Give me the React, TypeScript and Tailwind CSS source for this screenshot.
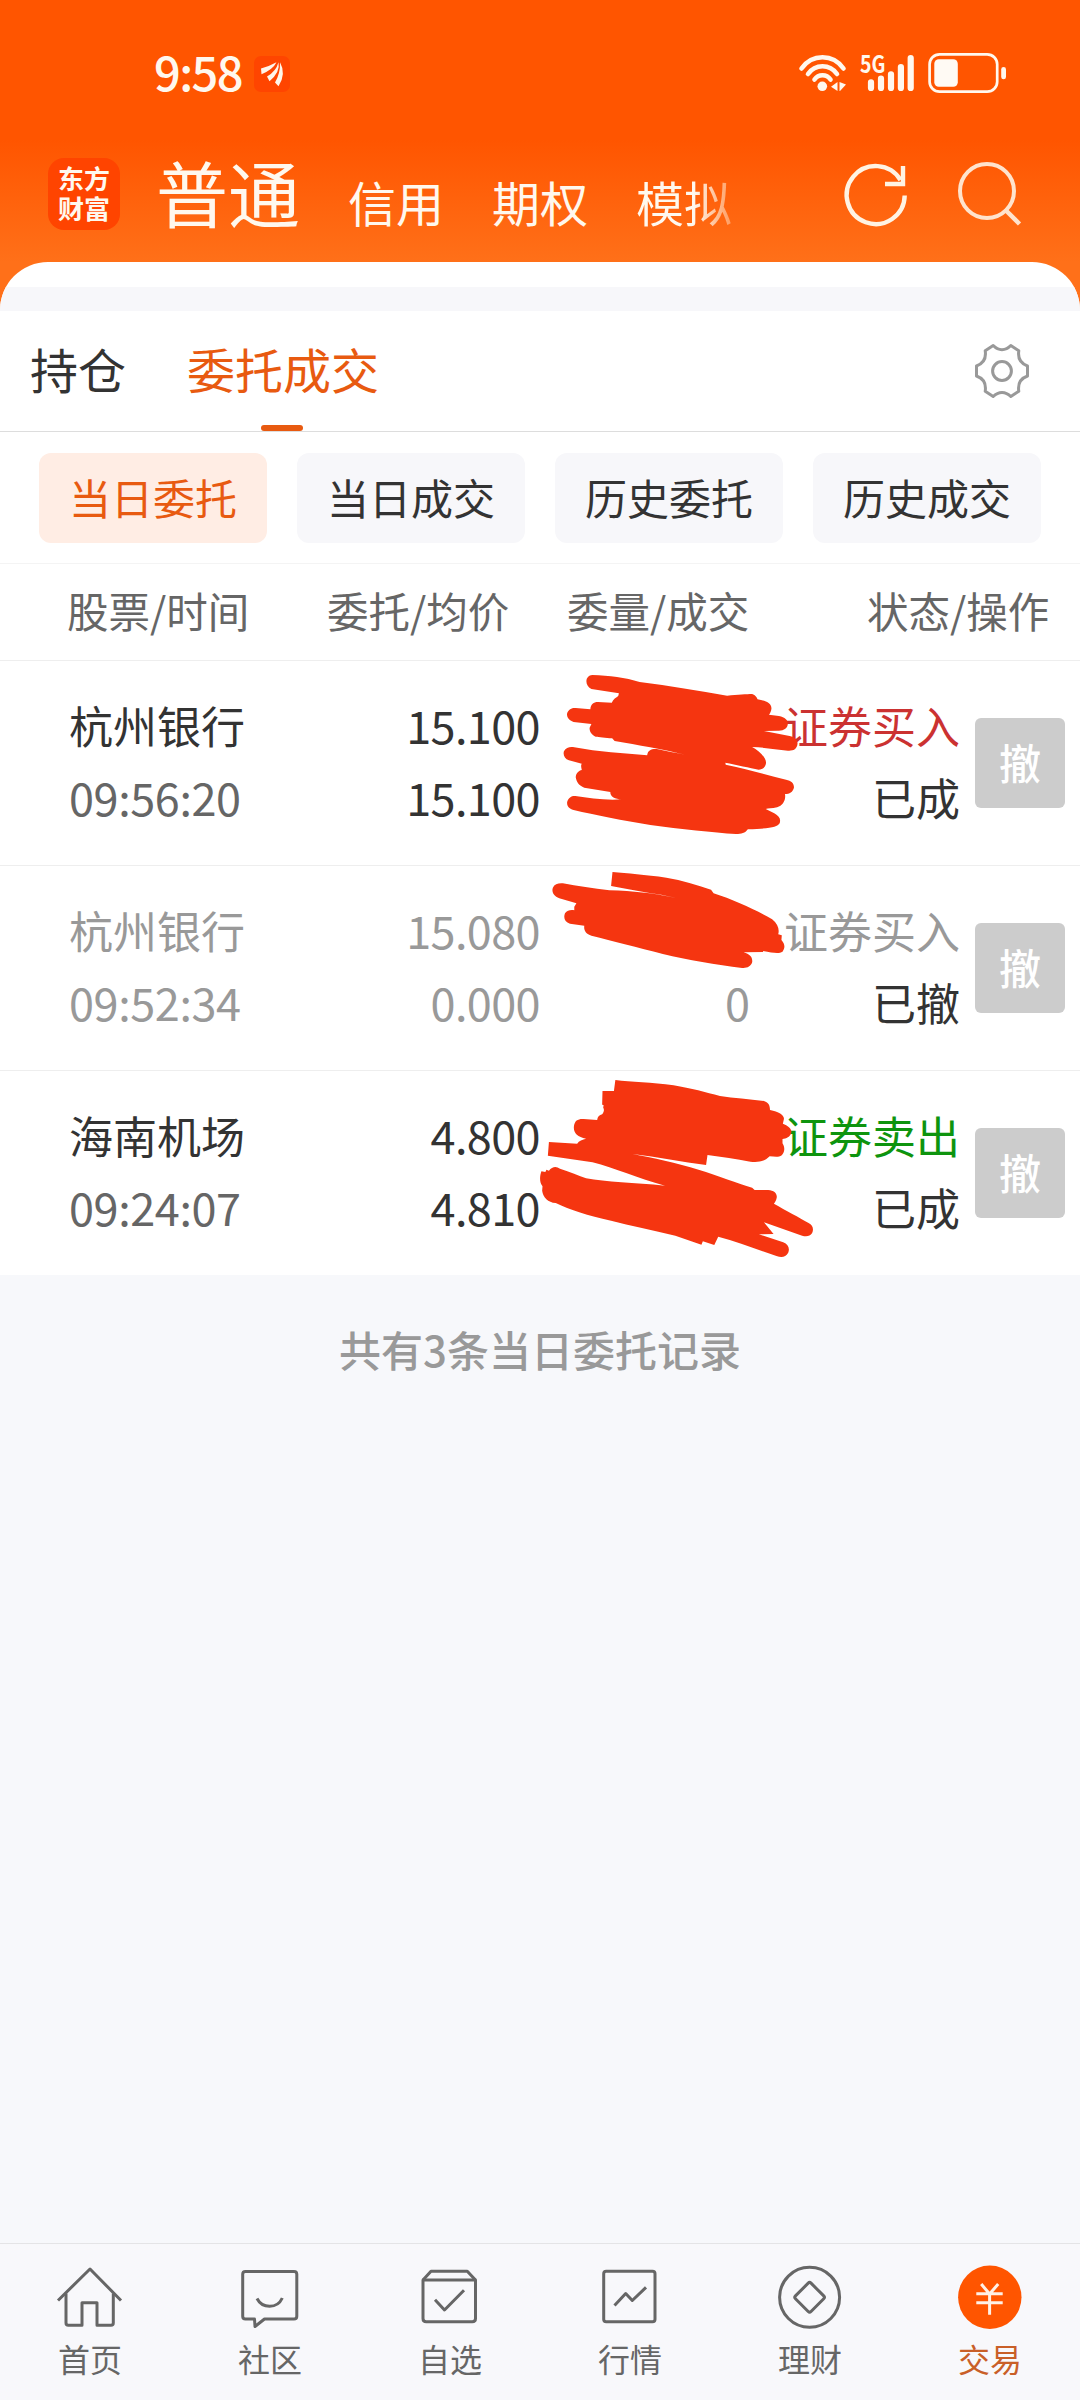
import type { ReactNode } from "react";

const chips = ["当日委托", "当日成交", "历史委托", "历史成交"];

type Order = {
  name: string;
  time: string;
  price: string;
  avg: string;
  filled?: string;
  side: string;
  sideClass: string;
  state: string;
  mutedClass: string;
  timeClass: string;
  viewBox: string;
  svgClass: string;
  strokes: string[];
};

const orders: Order[] = [
  {
    name: "杭州银行",
    time: "09:56:20",
    price: "15.100",
    avg: "15.100",
    side: "证券买入",
    sideClass: "text-[#cb3231]",
    state: "已成",
    mutedClass: "text-[#333333]",
    timeClass: "text-[#666666]",
    viewBox: "0 0 1568 615",
    svgClass: "h-[205px]",
    strokes: [
      "M203 45 C250 47 295 52 335 66 C420 78 500 92 580 107 C610 103 635 103 650 102 C660 106 663 112 665 118 C690 122 705 130 704 146 C703 154 700 160 697 164 L725 168 C742 172 750 180 750 190 C750 206 738 213 722 212 L683 213 L755 228 C770 231 778 240 777 252 C775 268 765 273 750 272 C716 268 682 262 650 261 C668 272 688 290 689 308 C688 320 680 329 668 329 C645 324 605 314 575 308 L576 314 C630 325 690 345 745 359 C760 362 768 370 767 383 C764 396 755 402 742 402 C745 420 736 437 720 442 C705 446 695 445 688 447 L712 460 C726 468 731 478 727 490 C720 503 700 505 638 508 C630 520 620 522 605 522 C540 518 450 507 365 495 C290 482 210 465 150 450 C136 445 131 437 132 426 C136 412 145 407 155 408 C195 414 240 422 285 418 C265 417 252 410 253 396 L180 383 C165 378 158 365 156 352 C157 338 165 332 173 330 C171 322 170 315 173 311 L137 301 C125 296 120 285 123 274 C129 262 140 260 152 262 C220 276 290 280 356 286 C358 270 368 266 383 267 C410 273 435 279 462 284 C400 268 330 255 265 243 L258 235 C240 233 220 231 212 230 C199 224 194 212 195 203 L200 192 L150 186 C136 181 130 170 132 160 C136 147 146 143 156 144 L197 148 C198 132 206 126 218 126 L257 128 C260 118 270 112 275 108 L277 100 L200 87 C187 80 184 67 187 56 C191 48 197 45 203 45 Z",
    ],
  },
  {
    name: "杭州银行",
    time: "09:52:34",
    price: "15.080",
    avg: "0.000",
    filled: "0",
    side: "证券买入",
    sideClass: "text-[#999999]",
    state: "已撤",
    mutedClass: "text-[#999999]",
    timeClass: "text-[#999999]",
    viewBox: "0 615 1568 345",
    svgClass: "h-[115px]",
    strokes: [
      "M259 636 C300 640 350 644 410 653 C455 661 495 674 535 689 L542 700 C600 720 665 752 706 778 C722 792 727 808 723 823 L733 826 L732 840 C742 852 743 864 735 875 C725 882 710 879 680 873 L681 876 L626 877 C645 882 652 894 650 907 C646 920 636 925 622 924 C550 914 470 900 400 882 C330 862 260 843 200 827 C185 822 178 812 180 797 L140 791 C125 786 121 772 126 760 C132 751 142 749 152 751 L152 740 L158 730 L110 715 C94 709 88 695 92 683 C97 672 107 669 120 670 C160 678 205 685 250 691 C320 693 370 700 420 710 C455 717 490 726 520 738 C480 724 440 714 395 704 C345 697 300 687 255 678 Z",
    ],
  },
  {
    name: "海南机场",
    time: "09:24:07",
    price: "4.800",
    avg: "4.810",
    side: "证券卖出",
    sideClass: "text-[#0e940e]",
    state: "已成",
    mutedClass: "text-[#333333]",
    timeClass: "text-[#666666]",
    viewBox: "0 300 1568 615",
    svgClass: "h-[205px]",
    strokes: [
      "M267 330 C310 336 370 337 430 346 C480 355 520 367 560 378 C600 385 640 387 683 393 C697 398 700 408 700 420 C725 425 740 435 739 447 L736 461 C750 467 761 476 760 487 C757 501 745 507 735 507 L735 520 C742 532 742 545 733 556 C724 563 712 560 699 559 C685 575 665 578 645 575 C605 568 565 560 525 555 L521 585 C455 576 385 561 315 552 C370 563 440 579 500 599 C555 617 610 640 650 653 L657 660 L695 660 C711 661 720 670 719 682 C718 691 714 697 711 701 C745 722 782 742 808 759 C820 766 823 777 818 789 C812 799 802 801 790 797 L683 757 L710 792 L669 793 L737 817 C751 823 756 835 751 848 C743 862 733 863 718 858 C665 839 610 815 555 800 L544 825 L512 814 L508 824 L435 797 C370 780 310 767 255 752 C190 738 140 719 100 699 C78 697 65 682 62 662 L63 649 C54 638 55 618 60 604 L71 606 L74 599 L81 602 C90 590 101 588 112 596 C140 606 165 617 185 625 C240 636 320 638 406 647 C330 625 265 594 203 577 L78 557 L81 516 L160 521 C165 512 175 508 185 506 C160 501 149 488 151 469 C153 451 163 446 178 447 L216 450 C217 440 223 435 230 433 C236 425 236 417 233 413 L234 405 L230 404 L231 363 L263 363 Z",
    ],
  },
];

const navItems: { label: string; active?: boolean; icon: ReactNode }[] = [
  {
    label: "首页",
    icon: (
      <>
        <path d="M3 40.5 L35 9 L66 40.5" />
        <path d="M11 33.5 V63 Q11 65.3 13.3 65.3 H27 V42.7 H42 V65.3 H56 Q58.3 65.3 58.3 63 V33.5" />
      </>
    ),
  },
  {
    label: "社区",
    icon: (
      <>
        <path d="M10.5 11.5 H59 Q61.8 11.5 61.8 14.3 V56.2 Q61.8 59 59 59 H29.500 L20 66.5 L19.5 59 H10.5 Q7.7 59 7.7 56.2 V14.3 Q7.7 11.5 10.5 11.5 Z" />
        <path d="M22 38.5 Q26 46.3 34.7 46.3 Q43.5 46.3 47.3 38" />
      </>
    ),
  },
  {
    label: "自选",
    icon: (
      <>
        <path d="M8 20 L16 11.2 H52.3 L60.5 20" />
        <path d="M8 20 H60.5 V58.5 Q60.5 61.7 57.3 61.7 H11.2 Q8 61.7 8 58.5 Z" />
        <path d="M20 39.8 L29.5 50 L49 30.3" />
      </>
    ),
  },
  {
    label: "行情",
    icon: (
      <>
        <rect x="8.7" y="11.2" width="51.3" height="50.5" rx="2.5" />
        <path d="M19.5 45.5 L30.7 33.5 L37.3 40.5 L51 27.3" />
      </>
    ),
  },
  {
    label: "理财",
    icon: (
      <>
        <circle cx="34.6" cy="37.3" r="30" />
        <rect x="23.6" y="26.3" width="22" height="22" rx="2" transform="rotate(45 34.6 37.3)" />
      </>
    ),
  },
  {
    label: "交易",
    active: true,
    icon: (
      <>
        <circle cx="34.8" cy="37.3" r="31.7" fill="#ff5500" stroke="none" />
        <path d="M26.2 24 L34.6 34 L43.2 24 M21.3 33.7 H47.7 M21.3 42.7 H47.7 M34.6 34 V54.7" stroke="#fff1e6" />
      </>
    ),
  },
];

function StatusBar() {
  return (
    <div className="flex h-[140px] items-start">
      <div className="mt-[35px] ml-[154px] h-[71px] w-[100px] text-[47px] leading-[71px] font-medium tracking-[-1.6px] text-[#fff8ee]">
        9:58
      </div>
      <svg className="mt-[56px] h-9 w-9" viewBox="0 0 36 36">
        <rect width="36" height="36" rx="7" fill="#ff4500" />
        <g fill="#fff5ea">
          <path d="M7 12.500 Q15 10.500 22.500 6.300 Q19 13.500 7.500 18.300 Z" />
          <path d="M13 20.500 Q22 15.500 24.500 6.300 Q26.500 16 15.500 25.300 Z" />
          <path d="M21 26.500 Q26.500 17 26 6.300 Q32.500 18 24.500 30.300 Z" />
        </g>
      </svg>
      <svg className="mt-[38px] ml-[504px] h-[60px] w-[220px]" viewBox="794 38 220 60" fill="none" stroke="#fff8ee" strokeLinecap="round">
        <path d="M801.5 68.5 Q809.5 57.3 822.5 57.3 Q835.5 57.3 843.5 68.5" strokeWidth="4.6" />
        <path d="M808 74 Q813.5 66.3 822.5 66.3 Q831.5 66.3 837 74" strokeWidth="4.6" />
        <path d="M814.5 79.5 Q817.5 75.2 822.5 75.2 Q827.5 75.2 830.5 79.5" strokeWidth="4.6" />
        <circle cx="822.3" cy="86.3" r="4.8" fill="#fff8ee" stroke="none" />
        <path d="M831 86.7 L837.5 82 V91 M839.5 91 V82 L846 84.5 L840 91" fill="#fff8ee" stroke="none" />
        <text x="860" y="73" fill="#fff8ee" stroke="none" fontSize="24" fontWeight="700" textLength="25.5" lengthAdjust="spacingAndGlyphs" fontFamily="Noto Sans CJK SC, sans-serif">
          5G
        </text>
        <path d="M871 82.3 V88 M881 78.7 V88 M891 74.3 V88 M900.9 67 V88 M910.7 58 V88" strokeWidth="6.2" />
        <rect x="929.6" y="54.3" width="67.6" height="37.4" rx="10" strokeWidth="2.7" />
        <rect x="934.3" y="59.3" width="23.5" height="27.4" rx="4.5" fill="#fffaf4" stroke="none" />
        <rect x="1001.2" y="67" width="4.8" height="12.3" rx="2.4" fill="#fff8ee" stroke="none" />
      </svg>
    </div>
  );
}

function Header() {
  return (
    <header className="h-[311px] bg-[linear-gradient(to_bottom,#ff5500_0px,#ff5500_140px,#ff7019_262px,#ff7019_310px)]">
      <StatusBar />
      <div className="flex h-[122px] text-[#fff8ee]">
        <div className="mt-[18px] ml-12 h-[72px] w-[72px] rounded-[16px] bg-[#ff4400] pt-[5px] text-center text-[26px] leading-[30px] font-bold">
          东方
          <br />
          财富
        </div>
        <nav className="flex w-[620px] text-[48px] whitespace-nowrap">
          <span className="ml-[36px] text-[72px] leading-[101px]">普通</span>
          <span className="mt-[13px] ml-[48px] h-[96px] leading-[96px]">信用</span>
          <span className="mt-[13px] ml-[48px] h-[96px] leading-[96px]">期权</span>
          <span className="mt-[13px] ml-[48px] h-[96px] bg-[linear-gradient(to_right,#fff8ee_60%,#ff9a5c_100%)] bg-clip-text leading-[96px] text-transparent">
            模拟
          </span>
        </nav>
        <svg className="mt-[18px] ml-[100px] h-[72px] w-[72px]" viewBox="840 158 72 72" fill="none" stroke="#fff3e3" strokeWidth="4.4">
          <path d="M904.7 195.500 A29 29 0 1 1 900.5 180" />
          <path d="M903 166 V184 H885" />
        </svg>
        <svg className="mt-[18px] ml-[40px] h-[72px] w-[72px]" viewBox="952 158 72 72" fill="none" stroke="#ffe3cd" strokeWidth="4">
          <circle cx="987" cy="191" r="27" />
          <path d="M1005 209.5 L1019.5 224" strokeWidth="4.5" />
        </svg>
      </div>
      <div className="h-[49px] overflow-hidden rounded-t-[48px] bg-white pt-[25px]">
        <div className="h-6 bg-[#f7f7fa]" />
      </div>
    </header>
  );
}

function Tabs() {
  return (
    <div className="flex h-[121px] items-center border-b border-[#dddddd] bg-white pl-[30px] text-[48px] leading-[114px] whitespace-nowrap text-[#333333]">
      <span className="h-[120px]">持仓</span>
      <span className="relative ml-[61px] h-[120px] text-[#e85a10]">
        委托成交
        <span className="absolute bottom-0 left-[74px] h-[6px] w-[42px] rounded-full bg-[#e85a10]" />
      </span>
      <svg className="ml-[593px] h-[60px] w-[60px]" viewBox="-30 -30 60 60" fill="none" stroke="#999999" strokeWidth="3" strokeLinejoin="round">
        <circle r="9.4" />
        <path d="M8.8 -25.5 L16.8 -20.2 C15.6 -12.5 18.5 -7.5 25.5 -5 V5 C18.500 7.5 15.6 12.5 16.8 20.2 L8.8 25.5 C3.5 20 -3.5 20 -8.8 25.5 L-16.8 20.2 C-15.6 12.5 -18.5 7.5 -25.5 5 V-5 C-18.5 -7.5 -15.6 -12.5 -16.8 -20.2 L-8.8 -25.5 C-3.5 -20 3.5 -20 8.8 -25.5 Z" />
      </svg>
    </div>
  );
}

function OrderRow({ order }: { order: Order }) {
  return (
    <li className="relative flex h-[205px] border-t border-[#eeeeee] bg-white text-[44px] leading-[72px] whitespace-nowrap">
      <div className={`w-[240px] pt-[28px] pl-[69px] ${order.mutedClass}`}>
        <div>{order.name}</div>
        <div className={`text-[45px] tracking-[-0.4px] ${order.timeClass}`}>{order.time}</div>
      </div>
      <div className={`w-[300px] pt-[28px] text-right text-[45px] tracking-[-0.6px] ${order.mutedClass}`}>
        <div>{order.price}</div>
        <div>{order.avg}</div>
      </div>
      <div className="w-[210px] pt-[100px] text-right text-[45px] text-[#999999]">{order.filled}</div>
      <div className="w-[210px] pt-[28px] text-right">
        <div className={order.sideClass}>{order.side}</div>
        <div className="text-[#333333]">{order.state}</div>
      </div>
      <button className="mt-[57px] ml-[15px] h-[90px] w-[90px] rounded-[6px] bg-[#cccccc] text-[42px] leading-[86px] font-medium text-white">
        <span className="relative -top-px">撤</span>
      </button>
      <svg
        className={`pointer-events-none absolute -top-px left-[520px] w-[560px] ${order.svgClass}`}
        viewBox={order.viewBox}
        preserveAspectRatio="none"
        fill="#f53510"
      >
        {order.strokes.map((d) => (
          <path key={d} d={d} />
        ))}
      </svg>
    </li>
  );
}

export default function App() {
  return (
    <div className="flex h-[2400px] w-[1080px] flex-col bg-[#f7f8fb] font-['Noto_Sans_CJK_SC',sans-serif]">
      <Header />
      <Tabs />
      <div className="flex h-[131px] gap-[30px] bg-white pt-[21px] pl-[39px]">
        {chips.map((label, i) => (
          <button
            key={label}
            className={`h-[90px] w-[228px] rounded-[12px] pb-[3px] text-[42px] leading-[87px] ${
              i === 0 ? "bg-[#ffede4] text-[#e85a10]" : "bg-[#f7f7fa] text-[#333333]"
            }`}
          >
            {label}
          </button>
        ))}
      </div>
      <div className="flex h-[97px] border-t border-[#f4f4f4] bg-white pl-[67px] text-[41.5px] leading-[93px] whitespace-nowrap text-[#666666]">
        <span className="w-[260px]">股票/时间</span>
        <span className="w-[240px]">委托/均价</span>
        <span className="w-[300px]">委量/成交</span>
        <span>状态/操作</span>
      </div>
      <ul>
        {orders.map((order) => (
          <OrderRow key={order.time} order={order} />
        ))}
      </ul>
      <p className="h-[150px] text-center text-[42px] leading-[147px] font-medium text-[#999999]">共有3条当日委托记录</p>
      <nav className="mt-auto grid h-[157px] grid-cols-6 border-t border-[#e4e4e6] bg-[#f8f8fb]">
        {navItems.map((item) => (
          <a key={item.label} className="flex flex-col items-center pt-[16px]">
            <svg className="h-[74px] w-[70px]" viewBox="0 0 70 74" fill="none" stroke="#666666" strokeWidth="3" strokeLinejoin="round">
              {item.icon}
            </svg>
            <span className={`text-[32px] leading-[48px] ${item.active ? "text-[#c95f28]" : "text-[#666666]"}`}>{item.label}</span>
          </a>
        ))}
      </nav>
    </div>
  );
}
